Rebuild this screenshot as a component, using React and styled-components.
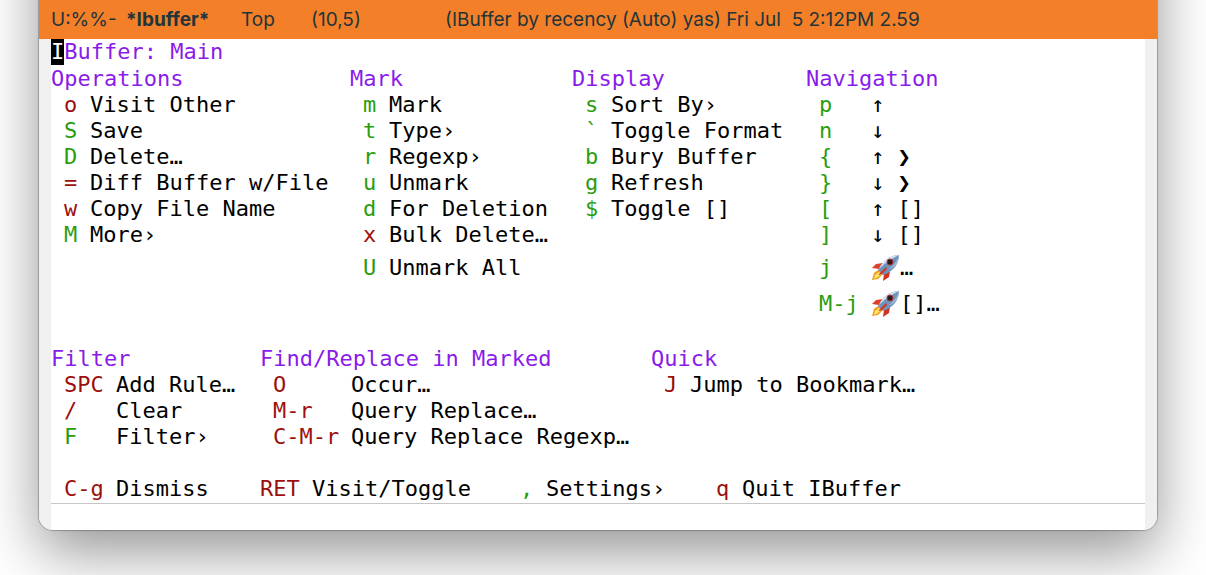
import React from "react";
import styled, { createGlobalStyle } from "styled-components";

const GlobalStyle = createGlobalStyle`
  *, *::before, *::after { box-sizing: border-box; }
  html, body { margin: 0; background: #ffffff; }
  body { overflow: hidden; }
`;

const colors = {
  heading: "#8a1bea",
  stay: "#2a9d0e",
  exit: "#9c100c",
  fringe: "#f0f0f0",
  modeLine: "#f38028",
  modeText: "#22343a",
};

const Desktop = styled.main`
  padding: 0 49px 45px 39px;
  overflow: hidden;
`;

const Window = styled.div`
  margin-top: -100px;
  border-radius: 14px;
  background: #ffffff;
  box-shadow: 0 0 1px 1px rgba(0, 0, 0, 0.25), 0 22px 58px 0 rgba(0, 0, 0, 0.42);
  overflow: hidden;
`;

const BufferAbove = styled.div`
  height: 100px;
  background: #ffffff;
`;

const ModeLine = styled.header`
  display: grid;
  grid-template-columns: 75px 115px 70px 134px 1fr;
  align-items: center;
  height: 39px;
  padding: 0 12px;
  background: ${colors.modeLine};
  color: ${colors.modeText};
  font: 19px/24px Inter, sans-serif;
  white-space: pre;
`;

const Body = styled.div`
  border: solid ${colors.fringe};
  border-width: 0 12px;
  font: 22px/26px "DejaVu Sans Mono", monospace;
  color: #000000;
`;

const Title = styled.h1`
  margin: 0;
  padding-bottom: 1px;
  font: inherit;
  color: ${colors.heading};
`;

const Cursor = styled.span`
  display: inline-block;
  background: #000000;
  color: #ffffff;
`;

const Groups = styled.div`
  display: grid;
  grid-template-columns: ${(p) => p.$columns};
  margin-bottom: 26px;
`;

const GroupTitle = styled.h2`
  margin: 0;
  font: inherit;
  color: ${colors.heading};
`;

const List = styled.ul`
  margin: 0;
  padding: 0 0 0 13px;
  list-style: none;
`;

const Command = styled.button`
  display: flex;
  align-items: center;
  height: ${(p) => (p.$tall ? 36 : 26)}px;
  padding: ${(p) => (p.$tall ? 4 : 0)}px 0 0;
  border: 0;
  background: none;
  font: inherit;
  color: inherit;
  white-space: pre;
  cursor: pointer;
`;

const Key = styled.kbd`
  width: ${(p) => p.$width}px;
  font: inherit;
  text-align: left;
  color: ${(p) => (p.$exit ? colors.exit : colors.stay)};
`;

const Footer = styled.nav`
  display: grid;
  grid-template-columns: 196px 260px 196px 1fr;
  padding-left: 13px;
  height: 28px;
  border-bottom: 1px solid #c6c6c6;
`;

const EchoArea = styled.div`
  height: 26px;
`;

const RocketIcon = styled.svg`
  width: 29px;
  height: 28px;
  flex: none;
`;

function Rocket() {
  return (
    <RocketIcon viewBox="0 0 29 28" role="img" aria-label="Jump">
      <path d="M12 9 L5 10 L1 14 L8 15 Z" fill="#e0402a" />
      <path d="M19 17 L18 23 L12 27 L13 20 Z" fill="#d03420" />
      <path d="M7 16 L3 19 L1 26 L7 25 L12 20 Z" fill="#f49a1c" />
      <path d="M8 18 L4 21 L3 25 L7 23 L10 20 Z" fill="#fdea72" />
      <path d="M28 1 C20 1 11 7 7 16 L12 21 C21 18 28 11 28 1 Z" fill="#6f93bd" />
      <path d="M28 1 C20 1 12 6 8 15 C14 9 20 5 28 1 Z" fill="#d3e2ee" />
      <path d="M28 1 C27 5 24 11 17 16 C23 14 28 9 28 1 Z" fill="#a4bdd6" />
      <path d="M15 13 L7 21 L11 20 L16 15 Z" fill="#d8331c" />
      <circle cx="19" cy="8" r="3" fill="#33191f" stroke="#a8312a" />
    </RocketIcon>
  );
}

const topGroups = [
  {
    title: "Operations",
    items: [
      ["o", "Visit Other", true],
      ["S", "Save"],
      ["D", "Delete…"],
      ["=", "Diff Buffer w/File", true],
      ["w", "Copy File Name", true],
      ["M", "More›"],
    ],
  },
  {
    title: "Mark",
    items: [
      ["m", "Mark"],
      ["t", "Type›"],
      ["r", "Regexp›"],
      ["u", "Unmark"],
      ["d", "For Deletion"],
      ["x", "Bulk Delete…", true],
      ["U", "Unmark All", false, "tall"],
    ],
  },
  {
    title: "Display",
    items: [
      ["s", "Sort By›"],
      ["`", "Toggle Format"],
      ["b", "Bury Buffer"],
      ["g", "Refresh"],
      ["$", "Toggle []"],
    ],
  },
  {
    title: "Navigation",
    keyWidth: 52,
    items: [
      ["p", "↑"],
      ["n", "↓"],
      ["{", "↑ ❯"],
      ["}", "↓ ❯"],
      ["[", "↑ []"],
      ["]", "↓ []"],
      ["j", "…", false, "rocket"],
      ["M-j", "[]…", false, "rocket"],
    ],
  },
];

const bottomGroups = [
  {
    title: "Filter",
    keyWidth: 52,
    items: [
      ["SPC", "Add Rule…", true],
      ["/", "Clear", true],
      ["F", "Filter›"],
    ],
  },
  {
    title: "Find/Replace in Marked",
    keyWidth: 78,
    items: [
      ["O", "Occur…", true],
      ["M-r", "Query Replace…", true],
      ["C-M-r", "Query Replace Regexp…", true],
    ],
  },
  {
    title: "Quick",
    items: [["J", "Jump to Bookmark…", true]],
  },
];

function MenuCommand({ item, keyWidth = 26 }) {
  const [key, label, exit, variant] = item;
  return (
    <Command type="button" $tall={Boolean(variant)}>
      <Key $width={keyWidth} $exit={exit}>{key}</Key>
      {variant === "rocket" && <Rocket />}
      <span>{label}</span>
    </Command>
  );
}

function GroupRow({ groups, columns }) {
  return (
    <Groups $columns={columns}>
      {groups.map((group) => (
        <section key={group.title}>
          <GroupTitle>{group.title}</GroupTitle>
          <List>
            {group.items.map((item) => (
              <li key={item[0]}>
                <MenuCommand item={item} keyWidth={group.keyWidth} />
              </li>
            ))}
          </List>
        </section>
      ))}
    </Groups>
  );
}

export default function App() {
  return (
    <Desktop>
      <GlobalStyle />
      <Window>
        <BufferAbove />
        <ModeLine>
          <span>U:%%-</span>
          <strong>*Ibuffer*</strong>
          <span>Top</span>
          <span>(10,5)</span>
          <span>(IBuffer by recency (Auto) yas) Fri Jul  5 2:12PM 2.59</span>
        </ModeLine>
        <Body>
          <Title><Cursor>I</Cursor>Buffer: Main</Title>
          <GroupRow groups={topGroups} columns="299px 222px 234px 1fr" />
          <GroupRow groups={bottomGroups} columns="209px 391px 1fr" />
          <Footer>
            <MenuCommand item={["C-g", "Dismiss", true]} keyWidth={52} />
            <MenuCommand item={["RET", "Visit/Toggle", true]} keyWidth={52} />
            <MenuCommand item={[",", "Settings›"]} />
            <MenuCommand item={["q", "Quit IBuffer", true]} />
          </Footer>
          <EchoArea />
        </Body>
      </Window>
    </Desktop>
  );
}
